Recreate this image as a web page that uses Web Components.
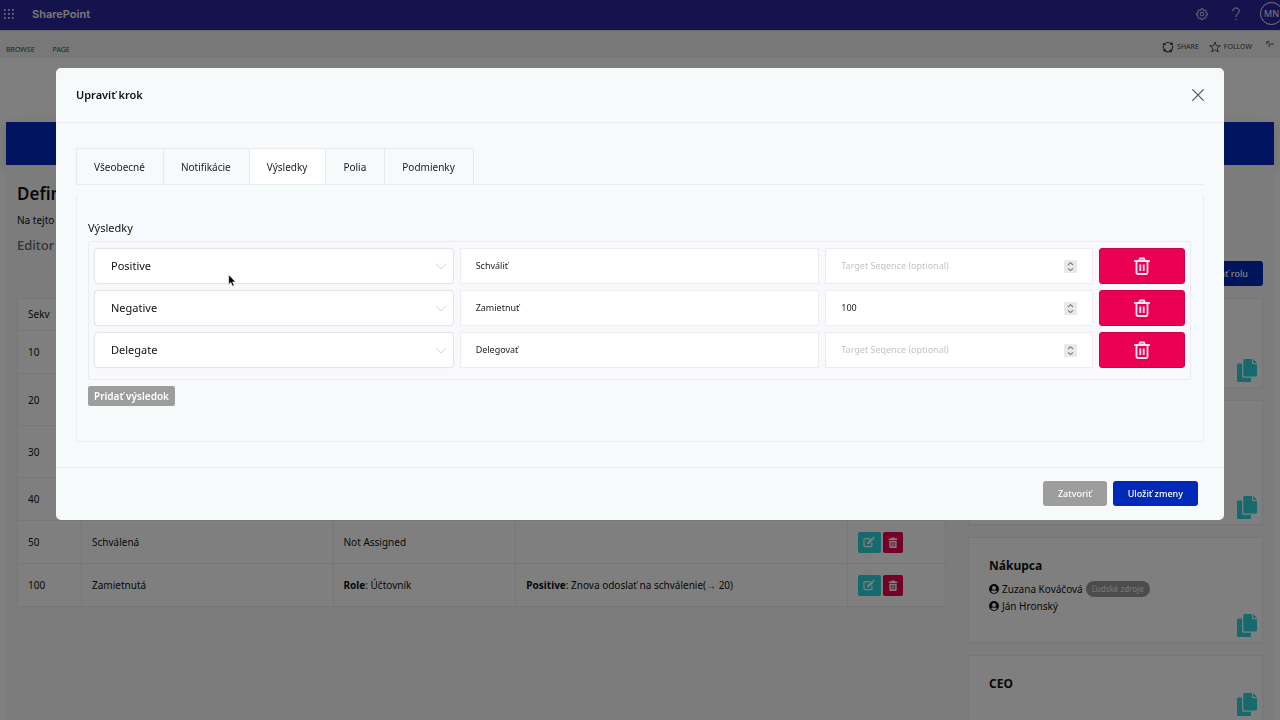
<!DOCTYPE html>
<html lang="sk">
<head>
<meta charset="utf-8">
<title>Upraviť krok</title>
<style>
  html, body { margin: 0; height: 100%; }
  body { font-family: "Noto Sans", "Open Sans", sans-serif; font-size: 10px; color: #111; overflow: hidden; }
</style>
</head>
<body>
<workflow-app></workflow-app>
<script>
const ICONS = {
  waffle: '<svg viewBox="0 0 12 12" fill="currentColor">' + [1, 5, 9].map(y => [1, 5, 9].map(x => `<rect x="${x}" y="${y}" width="1.7" height="1.7" rx=".5"/>`).join('')).join('') + '</svg>',
  gear: '<svg viewBox="0 0 24 24" fill="none" stroke="currentColor" stroke-width="1.8" stroke-linejoin="round"><circle cx="12" cy="12" r="3.6"/><path d="M10.3 1.5h3.4l.6 3 1.7.7 2.5-1.7 2.4 2.4-1.7 2.5.7 1.7 3 .6v3.4l-3 .6-.7 1.7 1.7 2.5-2.4 2.4-2.5-1.7-1.7.7-.6 3h-3.4l-.6-3-1.7-.7-2.5 1.7-2.4-2.4 1.7-2.5-.7-1.7-3-.6v-3.4l3-.6.7-1.7-1.7-2.5 2.4-2.4 2.5 1.7 1.7-.7z"/></svg>',
  help: '<svg viewBox="0 0 12 14" fill="none" stroke="currentColor" stroke-width="1"><path d="M2.8 4.2C2.8 2 4.2 1 6 1s3.300 1.200 3.300 3C9.300 6.600 6 6.800 6 10"/><path d="M6 11.800v1.400"/></svg>',
  share: '<svg viewBox="0 0 24 24" fill="none" stroke="currentColor" stroke-width="2.2"><path d="M7 4.500a9 9 0 0 1 9-.500M21 9a9.500 9.500 0 0 1-2.500 10M14 21.500a9 9 0 0 1-8-2M3 15a9 9 0 0 1 0-6"/><g fill="currentColor" stroke="none"><circle cx="19" cy="5.500" r="3"/><circle cx="4.500" cy="6.500" r="2.600"/><circle cx="5" cy="18" r="3"/><circle cx="17" cy="20" r="3"/></g></svg>',
  star: '<svg viewBox="0 0 24 24" fill="none" stroke="currentColor" stroke-width="1.8" stroke-linejoin="miter"><path d="M12 2l2.700 7.400 7.800.2-6.200 4.800 2.200 7.500L12 17.500l-6.500 4.400 2.200-7.500L1.500 9.600l7.800-.2z"/></svg>',
  focus: '<svg viewBox="0 0 10 10" fill="none" stroke="currentColor" stroke-width="1"><path d="M1 4.500V2h3M3.500 8V4.500H9M3 1l-2 2"/></svg>',
  close: '<svg viewBox="0 0 12 12" fill="none" stroke="currentColor" stroke-width="1.2" stroke-linecap="round"><path d="M.7.7l10.600 10.600M11.300.7L.7 11.300"/></svg>',
  chevron: '<svg viewBox="0 0 12 7" fill="none" stroke="currentColor" stroke-width="1"><path d="M.7.7L6 6 11.300.7"/></svg>',
  spin: '<svg viewBox="0 0 13 13" fill="none" stroke="currentColor" stroke-width="1.1"><path d="M4 5l2.500-2.300L9 5M4 8.300l2.500 2.300L9 8.300"/></svg>',
  trash: '<svg viewBox="0 0 16 18" fill="none" stroke="currentColor" stroke-width="1.8"><path d="M.8 4h14.400" stroke-linecap="round"/><path d="M5 4l1-2.500h4L11 4"/><path d="M2.500 4.500v11.300q0 1.200 1.200 1.200h8.600q1.200 0 1.200-1.200V4.500"/><path d="M6.300 7.500v6.500M9.700 7.500v6.500"/></svg>',
  bin: '<svg viewBox="0 0 16 18"><path fill="currentColor" fill-rule="evenodd" d="M5.500 1h5l.8 1.500H15V5H1V2.500h3.700zM2 6h12v10.500q0 1.500-1.500 1.500h-9Q2 18 2 16.500zM4.500 8v7.500h1.300V8zM7.400 8v7.500h1.300V8zM10.200 8v7.500h1.300V8z"/></svg>',
  edit: '<svg viewBox="0 0 18 16"><path fill="none" stroke="currentColor" stroke-width="1.8" d="M10.500 2.800H3.200Q1.500 2.800 1.500 4.500v8.800Q1.500 15 3.200 15h8.500q1.700 0 1.700-1.700V9.500"/><path fill="currentColor" d="M6.500 8.500L13 2l2.600 2.600L9 11l-3 .5zM13.800 1.200L14.800.3q.6-.5 1.200 0l1.400 1.400q.5.6 0 1.200l-1 1z"/></svg>',
  user: '<svg viewBox="0 0 20 20"><path fill="currentColor" fill-rule="evenodd" d="M10 0a10 10 0 1 1 0 20 10 10 0 0 1 0-20zM10 4a3.900 3.900 0 1 0 0 7.800A3.900 3.900 0 0 0 10 4zM10 18c2.600 0 4.700-1.200 6-3-.8-1.500-2-2.200-3.500-2.200-.8.3-1.600.5-2.500.5s-1.700-.2-2.500-.5C6 12.800 4.800 13.500 4 15c1.300 1.800 3.400 3 6 3z"/></svg>',
  copy: '<svg viewBox="0 0 20 23" fill="currentColor"><path d="M7.500 0H15v4.300q0 1 1 1H20v11q0 1.200-1.200 1.200H7.500q-1.200 0-1.200-1.200V1.200Q6.300 0 7.500 0zM16.200 0L20 4.100h-3.800z"/><path d="M1.200 4.500h3.900v12.800q0 1.500 1.500 1.500H14v3q0 1.200-1.200 1.200H1.200Q0 23 0 21.800V5.700q0-1.200 1.200-1.200z"/></svg>',
  pointer: '<svg viewBox="0 0 8 13"><path fill="#000" stroke="#fff" stroke-width=".6" d="M.7.8v9.700l2.200-2 1.600 3.700 1.700-.8-1.600-3.500h3z"/></svg>'
};

function define(name, html, setup) {
  const template = document.createElement('template');
  template.innerHTML = html;
  customElements.define(name, class extends HTMLElement {
    constructor() {
      super();
      this.attachShadow({ mode: 'open' }).append(template.content.cloneNode(true));
    }
    connectedCallback() {
      if (setup && !this.ready) { this.ready = true; setup(this, this.shadowRoot); }
    }
  });
}

define('ui-icon', `<style>
  :host { display: inline-block; flex: none; line-height: 0; width: 12px; height: 12px; }
  svg { display: block; width: 100%; height: 100%; overflow: visible; }
</style>`, (el, root) => root.append(document.createRange().createContextualFragment(ICONS[el.getAttribute('name')])));

define('suite-bar', `<style>
  :host { display: flex; align-items: center; height: 30px; padding: 0 0 3px 3px; box-sizing: border-box; background: #2a269c; color: #f0f0f8; overflow: hidden; }
  button { all: unset; display: flex; }
  strong { flex: 1; margin-left: 17px; font: 600 11px/16px Inter, sans-serif; }
  .help { margin: 0 18px 0 22px; }
  .me { box-sizing: border-box; width: 23px; height: 23px; margin-right: -3px; border: 1px solid; border-radius: 50%; justify-content: center; align-items: center; font-size: 9px; }
  .help ui-icon { height: 14px; }
</style>
<button aria-label="Apps"><ui-icon name="waffle"></ui-icon></button>
<strong>SharePoint</strong>
<button aria-label="Settings"><ui-icon name="gear"></ui-icon></button>
<button class="help" aria-label="Help"><ui-icon name="help"></ui-icon></button>
<button class="me">MN</button>`);

define('ribbon-bar', `<style>
  :host { display: flex; align-items: flex-start; height: 28px; box-sizing: border-box; padding: 9px 5px 0 6px; background: #f1f1f1; color: #444; font-size: 7px; line-height: 14px; }
  nav { display: flex; flex: 1; gap: 18px; padding-top: 3px; }
  a { color: inherit; text-decoration: none; }
  .actions { display: flex; }
  button { all: unset; display: flex; align-items: center; gap: 3px; margin-right: 10px; }
  .focus { margin: 0 0 0 4px; align-self: flex-start; }
  .focus ui-icon { width: 9px; height: 9px; }
</style>
<nav><a href="#browse">BROWSE</a><a href="#page">PAGE</a></nav>
<div class="actions">
  <button><ui-icon name="share"></ui-icon>SHARE</button>
  <button><ui-icon name="star"></ui-icon>FOLLOW</button>
  <button class="focus" aria-label="Focus on content"><ui-icon name="focus"></ui-icon></button>
</div>`);

const stepRow = (n, h, a = '', b = '', c = '') => `<tr class="${h}"><td>${n}</td><td>${a}</td><td>${b}</td><td>${c}</td><td><div class="tools"><button class="edit" aria-label="Upraviť"><ui-icon name="edit"></ui-icon></button><button class="del" aria-label="Zmazať"><ui-icon name="bin"></ui-icon></button></div></td></tr>`;
define('steps-table', `<style>
  :host { display: block; }
  table { width: 100%; table-layout: fixed; border-collapse: collapse; background: #fff; line-height: 16px; }
  th, td { box-sizing: border-box; padding: 0 10px; border: 1px solid #ececf0; text-align: left; }
  th { height: 32px; padding-bottom: 2px; font-weight: 400; }
  .low td { height: 43px; }
  .high td { height: 52px; }
  .arrow { font-family: "Liberation Sans", sans-serif; }
  .tools { display: flex; gap: 2px; }
  button { all: unset; display: flex; align-items: center; justify-content: center; height: 21px; border-radius: 2px; color: #fff; }
  .edit { width: 23px; background: #2cd3da; }
  .del { width: 20px; background: #e6004f; }
  .del ui-icon { width: 10px; height: 11px; }
</style>
<table>
  <colgroup><col style="width:6.9%"><col style="width:27.1%"><col style="width:19.7%"><col style="width:35.7%"><col></colgroup>
  <thead><tr><th>Sekv</th><th></th><th></th><th></th><th></th></tr></thead>
  <tbody>${stepRow(10, 'low')}${stepRow(20, 'high')}${stepRow(30, 'high')}${stepRow(40, 'low')}${stepRow(50, 'low', 'Schválená', 'Not Assigned')}${stepRow(100, 'low', 'Zamietnutá', '<b>Role</b>: Účtovník', '<b>Positive</b>: Znova odoslať na schválenie(<span class="arrow">→</span> 20)')}</tbody>
</table>`);

define('role-person', `<style>
  :host { display: flex; align-items: center; gap: 3px; height: 17px; font-size: 10px; }
  ui-icon { width: 10px; height: 10px; }
</style><ui-icon name="user"></ui-icon><slot></slot>`);

define('role-card', `<style>
  :host { display: block; position: relative; box-sizing: border-box; min-height: 67px; padding: 19px 20px 22px; background: #fff; border: 1px solid #ececf0; }
  :host([size="one"]) { min-height: 90px; }
  :host([size="three"]) { min-height: 125px; }
  h3 { margin: 0; font: 700 12px/17px "Noto Sans", sans-serif; }
  ::slotted(:first-child) { margin-top: 6px; }
  ::slotted(:last-child) { margin-bottom: 6px; }
  button { all: unset; position: absolute; right: 5px; bottom: 5px; color: #2cd3da; }
  button ui-icon { display: block; width: 20px; height: 23px; }
</style><h3></h3><slot></slot><button aria-label="Kopírovať"><ui-icon name="copy"></ui-icon></button>`,
(el, root) => { const h = root.querySelector('h3'); if (el.hasAttribute('label')) h.textContent = el.getAttribute('label'); else h.remove(); });

define('outcome-row', `<style>
  :host { display: grid; grid-template-columns: 360fr 360fr 268fr 86fr; gap: 6px; height: 36px; }
  .field { position: relative; display: flex; align-items: center; background: #fff; border: 1px solid #ebedf2; }
  .pick { border-radius: 4px; border-color: #e2e5ec; box-shadow: 0 0 1px #e2e5ec; }
  select, input { all: unset; flex: 1; min-width: 0; box-sizing: border-box; height: 34px; padding: 0 15px; font: 9px/34px "Noto Sans", sans-serif; color: #222; }
  select { font-size: 11px; padding: 0 16px; color: #111; }
  input::placeholder { color: #c4c4c8; }
  input::-webkit-inner-spin-button { display: none; }
  .pick ui-icon { position: absolute; right: 6px; height: 7px; color: #d2d4da; pointer-events: none; }
  .num ui-icon { width: 13px; height: 13px; margin-right: 15px; background: #e9e9ed; color: #77777d; border-radius: 1px; }
  button { all: unset; display: flex; align-items: center; justify-content: center; box-sizing: border-box; background: #e90052; border: 1px solid #d0004a; border-radius: 3px; color: #ffe3ee; }
  button ui-icon { width: 16px; height: 18px; }
</style>
<div class="field pick"><select aria-label="Typ výsledku"><option></option></select><ui-icon name="chevron"></ui-icon></div>
<div class="field"><input class="name" type="text" aria-label="Názov výsledku"></div>
<div class="field num"><input class="target" type="number" placeholder="Target Seqence (optional)" aria-label="Target Seqence"><ui-icon name="spin"></ui-icon></div>
<button aria-label="Zmazať výsledok"><ui-icon name="trash"></ui-icon></button>`,
(el, root) => {
  root.querySelector('option').textContent = el.getAttribute('type');
  root.querySelector('.name').value = el.getAttribute('name');
  root.querySelector('.target').value = el.getAttribute('target') || '';
});

define('ui-button', `<style>
  :host { display: block; }
  button { all: unset; box-sizing: border-box; display: block; height: 25px; padding: 0 15px; border-radius: 3px; background: #9d9d9d; color: #fff; font-weight: 500; font-size: 9px; line-height: 25px; white-space: nowrap; }
  :host([kind="primary"]) button { background: #0029b9; }
  :host([kind="small"]) button { height: 20px; line-height: 20px; padding: 0 6px; font-weight: 600; font-size: 10px; border-radius: 2px; }
</style><button><slot></slot></button>`);

define('edit-modal', `<style>
  :host { display: flex; flex-direction: column; background: #f6fafb; border-radius: 5px; overflow: hidden; color: #111; }
  header { display: flex; align-items: center; justify-content: space-between; height: 54px; padding: 0 20px; border-bottom: 1px solid #e9edf0; }
  h1 { margin: 0; font: 600 11px/18px "Noto Sans", sans-serif; }
  .close { all: unset; display: flex; color: #555; }
  .body { padding: 25px 20px; }
  .tabs { display: flex; border-bottom: 1px solid #e9edf0; }
  .tabs button { all: unset; box-sizing: border-box; height: 36px; padding: 0 18px 0 17px; border: 1px solid #e6eaed; border-width: 1px 1px 0 0; line-height: 36px; color: #222; }
  .tabs button:first-child { border-left-width: 1px; }
  .tabs [aria-selected="true"] { background: #fff; }
  .pane { margin-top: 10px; padding: 23px 12px 35px 11px; border: 1px solid #e9edf0; border-top: 0; }
  h2 { margin: 0 0 3px; font: 400 11px/20px "Noto Sans", sans-serif; }
  .list { display: flex; flex-direction: column; gap: 6px; padding: 6px 5px 11px; margin-bottom: 6px; border: 1px solid #eaecf0; border-radius: 2px; background: #f9f9fb; }
  .pane ui-button { width: fit-content; }
  footer { display: flex; justify-content: flex-end; gap: 6px; padding: 13px 26px 14px; border-top: 1px solid #e9edf0; }
</style>
<header><h1>Upraviť krok</h1><button class="close" aria-label="Zavrieť"><ui-icon name="close"></ui-icon></button></header>
<div class="body">
  <div class="tabs" role="tablist"><button role="tab">Všeobecné</button><button role="tab">Notifikácie</button><button role="tab" aria-selected="true">Výsledky</button><button role="tab">Polia</button><button role="tab">Podmienky</button></div>
  <div class="pane" role="tabpanel">
    <h2>Výsledky</h2>
    <div class="list">
      <outcome-row type="Positive" name="Schváliť"></outcome-row>
      <outcome-row type="Negative" name="Zamietnuť" target="100"></outcome-row>
      <outcome-row type="Delegate" name="Delegovať"></outcome-row>
    </div>
    <ui-button kind="small">Pridať výsledok</ui-button>
  </div>
</div>
<footer><ui-button>Zatvoriť</ui-button><ui-button kind="primary">Uložiť zmeny</ui-button></footer>`);

define('workflow-app', `<style>
  :host { display: block; height: 100vh; overflow: hidden; background: #fff; }
  ribbon-bar { margin-bottom: 64px; border-top: 1px solid #d8d8e4; }
  .banner { height: 43px; margin: 0 6px; background: #0029bf; box-shadow: 0 4px 12px #9a9ab866; }
  main { margin: 0 6px; padding: 17px 11px 12px; background: #f8f8fb; min-height: 100vh; }
  h1 { margin: 0 0 6px; font: 600 17px/24px "Noto Sans", sans-serif; }
  p { margin: 0 0 7px; line-height: 16px; }
  h2 { margin: 0 0 6px; font: 500 13px/20px "Noto Sans", sans-serif; color: #666; }
  .bar { display: flex; justify-content: flex-end; margin-bottom: 12px; }
  .cols { display: grid; grid-template-columns: 929fr 295fr; gap: 22px; align-items: start; }
  .roles { display: grid; gap: 12px; }
  .pill { padding: 0 6px; border-radius: 8px; background: #999; color: #eee; font: 400 8px/16px "Noto Sans", sans-serif; }
  .backdrop { position: fixed; inset: 0; box-sizing: border-box; padding: 68px 56px; background: rgba(0, 0, 0, .5); }
  .pointer { position: absolute; left: 228px; top: 274px; width: 8px; height: 13px; }
</style>
<suite-bar></suite-bar>
<ribbon-bar></ribbon-bar>
<div class="banner"></div>
<main>
  <h1>Definícia</h1>
  <p>Na tejto</p>
  <h2>Editor</h2>
  <div class="bar"><ui-button kind="primary">Pridať rolu</ui-button></div>
  <div class="cols">
    <steps-table></steps-table>
    <div class="roles">
      <role-card size="one"></role-card>
      <role-card size="three"></role-card>
      <role-card label="Nákupca"><role-person>Zuzana Kováčová <span class="pill">Ľudské zdroje</span></role-person><role-person>Ján Hronský</role-person></role-card>
      <role-card label="CEO"></role-card>
    </div>
  </div>
</main>
<div class="backdrop"><edit-modal role="dialog" aria-modal="true" aria-label="Upraviť krok"></edit-modal><ui-icon class="pointer" name="pointer"></ui-icon></div>`);
</script>
</body>
</html>
